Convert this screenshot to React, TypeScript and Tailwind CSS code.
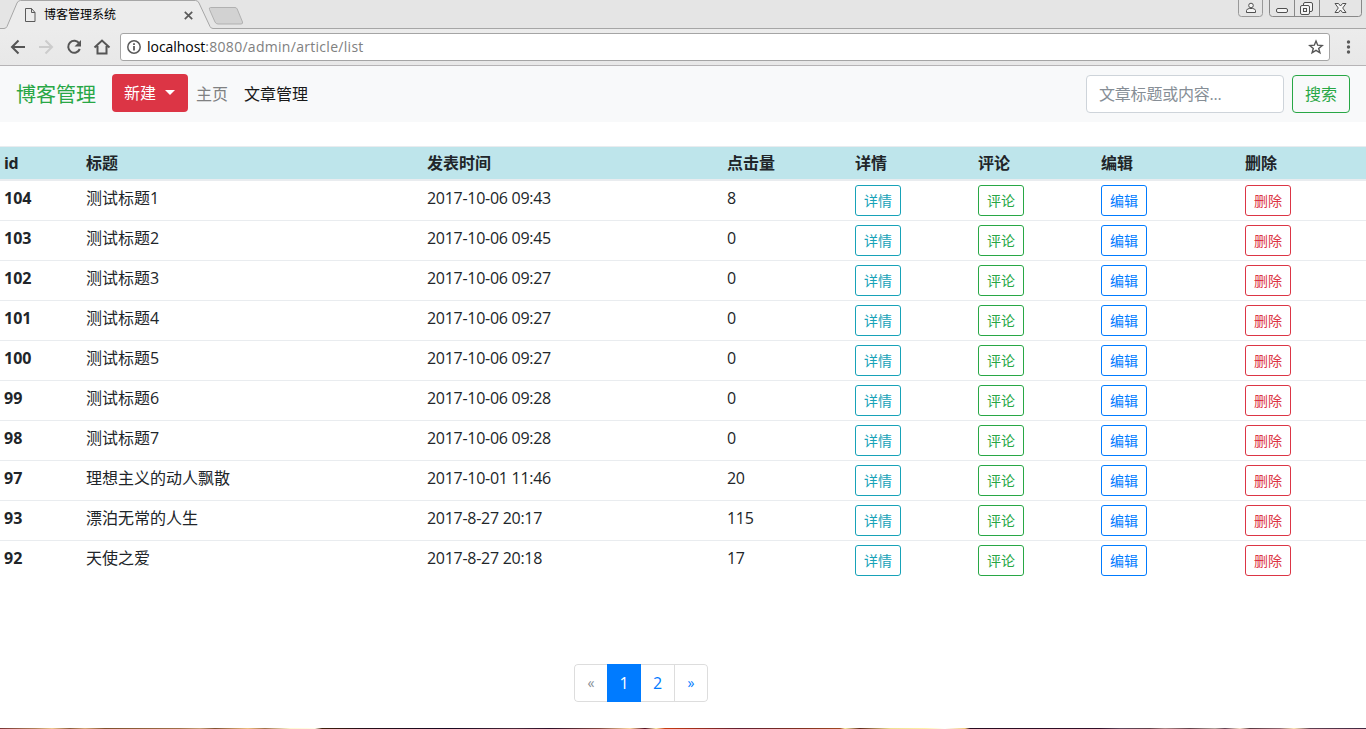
import type { ReactNode } from 'react';

const articles = [
  { id: 104, title: '测试标题1', time: '2017-10-06 09:43', hits: 8 },
  { id: 103, title: '测试标题2', time: '2017-10-06 09:45', hits: 0 },
  { id: 102, title: '测试标题3', time: '2017-10-06 09:27', hits: 0 },
  { id: 101, title: '测试标题4', time: '2017-10-06 09:27', hits: 0 },
  { id: 100, title: '测试标题5', time: '2017-10-06 09:27', hits: 0 },
  { id: 99, title: '测试标题6', time: '2017-10-06 09:28', hits: 0 },
  { id: 98, title: '测试标题7', time: '2017-10-06 09:28', hits: 0 },
  { id: 97, title: '理想主义的动人飘散', time: '2017-10-01 11:46', hits: 20 },
  { id: 93, title: '漂泊无常的人生', time: '2017-8-27 20:17', hits: 115 },
  { id: 92, title: '天使之爱', time: '2017-8-27 20:18', hits: 17 },
];

const headings = ['标题', '发表时间', '点击量', '详情', '评论', '编辑', '删除'];

const columns = 'grid grid-cols-[82px_341px_300px_128px_123px_123px_144px_125px]';

function TabStrip() {
  return (
    <div className="relative flex h-[29px] shrink-0 justify-between">
      <svg className="absolute inset-0" width="1366" height="29" viewBox="0 0 1366 29" fill="none">
        <path d="M0 28.5H5.5L17 2.5Q18 .5 20 .5H196Q198 .5 199 2.5L211 28.5H1366V29H0Z" fill="#ececec" />
        <path d="M0 28.5H4Q6 28.5 7 26.5L17 3Q18.200 .5 20.500 .5H195.500Q198 .5 199 3L210 26.500Q211 28.500 213 28.500H1366" stroke="#a6a6a6" />
        <path d="M210.500 7.500H235Q236.500 7.500 237.200 9L242.500 22Q243 24 241 24H218Q216 24 215 22L209.500 9.500Q208.800 7.500 210.500 7.500Z" fill="#d2d2d2" stroke="#b1b1b1" />
      </svg>
      <div className="relative flex h-[29px] w-[204px] items-center pl-[25px]">
        <svg width="11" height="14" viewBox="0 0 11 14" fill="none" stroke="#5a5a5a" className="mt-px">
          <path d="M.5 .5H6.500L10 4.500V13.500H.5ZM6.500 .5V4.500H10" />
        </svg>
        <span className="ml-[8px] w-[73px] pt-px text-[12px] leading-[16px] text-black">博客管理系统</span>
        <svg width="9" height="9" viewBox="0 0 9 9" className="mt-px ml-[67px] shrink-0" stroke="#5a5a5a" strokeWidth="1.7">
          <path d="M.8 .8L8.200 8.200M8.200 .8L.8 8.200" />
        </svg>
      </div>
      <svg className="relative mr-[4px]" width="124" height="18" viewBox="1238 0 124 18" fill="none" stroke="#999">
        <path d="M1238.500 0V13.500Q1238.500 16.500 1241.500 16.500H1259.500Q1262.500 16.500 1262.500 13.500V0" />
        <path d="M1269.500 0V13.500Q1269.500 16.500 1272.500 16.500H1358.500Q1361.500 16.500 1361.500 13.500V0M1294.500 0V16M1319.500 0V16" stroke="#888" />
        <g stroke="#505050">
          <circle cx="1251" cy="5.500" r="2.300" fill="#f5f5f5" />
          <path d="M1246.500 12.500V10.500Q1247 8.500 1249.500 8.500H1252.500Q1255 8.500 1255.500 10.500V12.500Z" fill="#f5f5f5" />
          <rect x="1276.500" y="8.500" width="11" height="4" rx="1.500" fill="#f5f5f5" />
          <rect x="1303.500" y="2.500" width="9" height="9" rx="1.500" fill="#f5f5f5" />
          <rect x="1300.500" y="5.500" width="9" height="9" rx="1.500" fill="#f5f5f5" />
          <rect x="1303.500" y="8.500" width="3" height="3" />
          <path d="M1335 3.500H1338.500L1340.500 6L1342.500 3.500H1346L1342.700 8L1346 12.500H1342.500L1340.500 10L1338.500 12.500H1335L1338.300 8Z" fill="#f5f5f5" />
        </g>
      </svg>
    </div>
  );
}

function AddressBar() {
  return (
    <div className="flex h-[37px] shrink-0 items-center border-b border-[#b6b4b6] bg-gradient-to-b from-[#ececec] to-[#e8e8e8]">
      <svg width="120" height="36" viewBox="0 29 120 36" fill="none" strokeWidth="2" className="shrink-0">
        <path d="M25 47H12.500M18.500 40.500L12 47L18.500 53.500" stroke="#555" />
        <path d="M39 47H51.500M45.500 40.500L52 47L45.500 53.500" stroke="#ccc" />
        <path d="M79.300 43.500A6 6 0 1 0 79.800 49" stroke="#555" />
        <path d="M81 40V46.500H74.500Z" fill="#555" />
        <path d="M94.500 47.500L102 40.500L109.500 47.500M97.500 46V53.500H106.500V46" stroke="#555" />
      </svg>
      <div className="flex h-[28px] w-[1210px] shrink-0 items-center rounded-[3px] border border-[#a5a5a5] bg-white px-[5px]">
        <svg width="16" height="16" viewBox="0 0 16 16" fill="none" stroke="#5a5a5a" strokeWidth="1.500">
          <circle cx="8" cy="8" r="6.200" />
          <path d="M8 7V11.500M8 4.300V6" strokeWidth="1.800" />
        </svg>
        <span className="ml-[5px] flex-1 font-['Open_Sans'] text-[14px] leading-[20px] tracking-[0.29px] text-[#808080]">
          <span className="tracking-[-0.04px] text-black">localhost</span>:8080/admin/article/list
        </span>
        <svg width="16" height="16" viewBox="0 0 16 16" fill="none" stroke="#555" strokeWidth="1.400">
          <path d="M8 2L9.700 6.200L14.200 6.500L10.700 9.400L11.900 13.800L8 11.400L4.100 13.800L5.300 9.400L1.800 6.500L6.300 6.200Z" />
        </svg>
      </div>
      <svg width="36" height="16" viewBox="0 0 36 16" fill="#5a5a5a">
        <circle cx="18.500" cy="3" r="1.700" />
        <circle cx="18.500" cy="8" r="1.700" />
        <circle cx="18.500" cy="13" r="1.700" />
      </svg>
    </div>
  );
}

function NavBar() {
  return (
    <nav className="flex h-[56px] shrink-0 items-center bg-[#f8f9fa] px-4">
      <span className="mr-4 pt-[2px] text-[20px] leading-[30px] text-[#28a745]">博客管理</span>
      <button className="mb-[2px] flex h-[38px] w-[76px] items-center rounded bg-[#dc3545] pl-3 text-white">
        新建
        <svg width="10" height="5" viewBox="0 0 10 5" className="mb-[2px] ml-[9px]" fill="white">
          <path d="M0 0H10L5 5Z" />
        </svg>
      </button>
      <a className="ml-2 text-[#808182]">主页</a>
      <a className="ml-4 text-[#191919]">文章管理</a>
      <input
        className="ml-auto h-[38px] w-[198px] rounded border border-[#ced4da] bg-white px-3 tracking-[-0.2px] placeholder:text-[#868e96] placeholder:opacity-100"
        placeholder="文章标题或内容..."
      />
      <button className="ml-2 h-[38px] w-[58px] rounded border border-[#28a745] text-[#28a745]">搜索</button>
    </nav>
  );
}

function RowButton({ tone, children }: { tone: string; children: ReactNode }) {
  return (
    <div className="px-1">
      <button className={`flex h-[31px] w-[46px] items-center justify-center rounded-[3px] border pb-px text-[14px] leading-[21px] ${tone}`}>
        {children}
      </button>
    </div>
  );
}

function ArticleTable() {
  return (
    <div className="mt-[24px]">
      <div className={`${columns} h-[35px] border-t border-b-2 border-t-[#e9ecef] border-b-[#e9ecef] bg-[#bee5eb] pt-1 font-bold`}>
        <span className="px-1 tracking-[-0.3px]">id</span>
        {headings.map((h) => (
          <span key={h} className="px-1">{h}</span>
        ))}
      </div>
      {articles.map((a) => (
        <div key={a.id} className={`${columns} h-[40px] border-b border-[#e9ecef] pt-1 last:border-b-0`}>
          <span className="px-1 pt-px font-bold">{a.id}</span>
          <span className="px-1 pt-px">{a.title}</span>
          <span className="px-1 pt-px tracking-[-0.28px]">{a.time}</span>
          <span className="px-1 pt-px tracking-[-0.28px]">{a.hits}</span>
          <RowButton tone="border-[#17a2b8] text-[#17a2b8]">详情</RowButton>
          <RowButton tone="border-[#28a745] text-[#28a745]">评论</RowButton>
          <RowButton tone="border-[#007bff] text-[#007bff]">编辑</RowButton>
          <RowButton tone="border-[#dc3545] text-[#dc3545]">删除</RowButton>
        </div>
      ))}
    </div>
  );
}

function Pagination() {
  return (
    <div className="mt-[83px] ml-[574px] flex h-[38px] w-[134px] overflow-hidden rounded text-center leading-[38px]">
      <span className="w-[33px] rounded-l border border-r-0 border-[#ddd] text-[14px] leading-[36px] text-[#868e96]">«</span>
      <span className="w-[34px] bg-[#007bff] text-white">1</span>
      <span className="w-[34px] border-y border-r border-[#ddd] leading-[36px] text-[#007bff]">2</span>
      <span className="w-[33px] rounded-r border border-l-0 border-[#ddd] text-[14px] leading-[36px] text-[#007bff]">»</span>
    </div>
  );
}

export default function App() {
  return (
    <div className="flex h-[729px] w-[1366px] flex-col overflow-hidden bg-white font-['Open_Sans','Noto_Sans_CJK_SC',sans-serif] text-[16px] leading-[24px] text-[#212529]">
      <header className="bg-[#e5e5e5]">
        <TabStrip />
        <AddressBar />
      </header>
      <NavBar />
      <main className="flex-1">
        <ArticleTable />
        <Pagination />
      </main>
      <div className="h-px shrink-0 bg-[linear-gradient(90deg,#7a3434_0px,#b08058_35px,#f0c890_52px,#8a5a38_70px,#d8a878_85px,#80502c_105px,#a07048_180px,#c8a078_200px,#805030_215px,#f0c080_248px,#a07048_265px,#fff8d0_290px,#fffce8_315px,#40200c_322px,#281018_360px,#180820_450px,#482838_515px,#2c1028_550px,#804840_600px,#ffd8a0_630px,#500c1c_645px,#fff0b0_656px,#c83c10_665px,#a83018_690px,#602030_740px,#803020_800px,#a04820_840px,#fff0a8_845px,#602818_860px,#f0e090_890px,#fff0a8_925px,#ffffff_945px,#f0c878_965px,#280c20_970px,#301028_1100px,#60485c_1120px,#604048_1150px,#b08888_1165px,#604048_1190px,#b0a098_1215px,#604050_1225px,#ffe8d0_1240px,#583840_1250px,#906870_1280px,#ffe8b8_1294px,#604050_1310px,#402840_1366px)]" />
    </div>
  );
}
